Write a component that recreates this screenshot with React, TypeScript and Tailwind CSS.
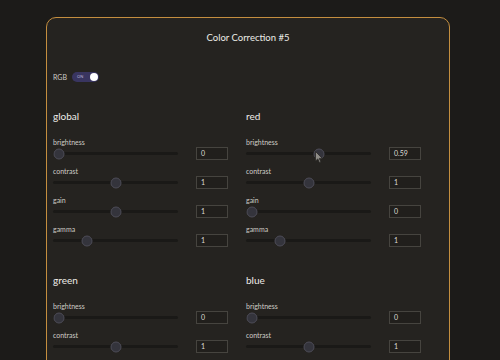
import React from 'react';

type Param = { name: string; value: number; min: number; max: number };

const channels: { title: string; params: Param[] }[] = [
  {
    title: 'global',
    params: [
      { name: 'brightness', value: 0, min: 0, max: 1 },
      { name: 'contrast', value: 1, min: 0, max: 2 },
      { name: 'gain', value: 1, min: 0, max: 2 },
      { name: 'gamma', value: 1, min: 0, max: 4 },
    ],
  },
  {
    title: 'red',
    params: [
      { name: 'brightness', value: 0.59, min: 0, max: 1 },
      { name: 'contrast', value: 1, min: 0, max: 2 },
      { name: 'gain', value: 0, min: 0, max: 2 },
      { name: 'gamma', value: 1, min: 0, max: 4 },
    ],
  },
  {
    title: 'green',
    params: [
      { name: 'brightness', value: 0, min: 0, max: 1 },
      { name: 'contrast', value: 1, min: 0, max: 2 },
      { name: 'gain', value: 1, min: 0, max: 2 },
      { name: 'gamma', value: 1, min: 0, max: 4 },
    ],
  },
  {
    title: 'blue',
    params: [
      { name: 'brightness', value: 0, min: 0, max: 1 },
      { name: 'contrast', value: 1, min: 0, max: 2 },
      { name: 'gain', value: 1, min: 0, max: 2 },
      { name: 'gamma', value: 1, min: 0, max: 4 },
    ],
  },
];

const Cursor = () => (
  <svg
    width="9"
    height="13"
    viewBox="0 0 9 13"
    className="absolute left-[0px] top-[1px] pointer-events-none"
  >
    <path
      d="M1 1 L1 10.5 L3.3 8.4 L4.9 12 L6.3 11.4 L4.8 7.9 L7.8 7.9 Z"
      fill="#8f8d88"
      stroke="#2a2826"
      strokeWidth="0.8"
    />
  </svg>
);

const SliderRow = ({ p, cursor }: { p: Param; cursor?: boolean }) => {
  const pct = (p.value - p.min) / (p.max - p.min);
  return (
    <div className="flex flex-col">
      <div className="h-[9px] text-[7px] leading-[9px] text-[#cfccc6]">{p.name}</div>
      <div className="flex items-center h-[13px] gap-[18px]">
        <div className="relative w-[125px] h-[3px] bg-[#1a1917] rounded-full">
          <div
            className="absolute top-1/2 -translate-y-1/2 -translate-x-1/2 w-[11px] h-[11px] rounded-full bg-[#34343c] border border-[#4d4c57]"
            style={{ left: `calc(5.5px + ${pct} * (100% - 11px))` }}
          >
            {cursor && <Cursor />}
          </div>
        </div>
        <div className="w-[32px] h-[13px] border border-[#46443f] bg-[#211f1c] flex items-center pl-[4px] text-[7px] text-[#dedbd5]">
          {p.value}
        </div>
      </div>
    </div>
  );
};

const Channel = ({ title, params }: { title: string; params: Param[] }) => (
  <div className="flex flex-col">
    <div className="h-[13px] text-[10px] leading-[13px] text-[#eeece8]">{title}</div>
    <div className="flex flex-col gap-[7px] mt-[15px]">
      {params.map((p) => (
        <SliderRow
          key={p.name}
          p={p}
          cursor={title === 'red' && p.name === 'brightness'}
        />
      ))}
    </div>
  </div>
);

const App = (): JSX.Element => {
  return (
    <div
      className="w-[500px] h-[360px] overflow-hidden bg-[#1c1b19] pt-[17px] pl-[46px]"
      style={{ fontFamily: 'Lato, "Open Sans", sans-serif' }}
    >
      <div className="w-[404px] h-[400px] rounded-t-[10px] border-[1.5px] border-[#c48e3f] bg-[#252320] px-[6px] pt-[13px]">
        <h1 className="text-center text-[9.5px] leading-[14px] text-[#ecebe7]">
          Color Correction #5
        </h1>
        <div className="flex items-center gap-[5px] mt-[27px] h-[10px]">
          <span className="text-[7px] text-[#cfccc6]">RGB</span>
          <div className="w-[27px] h-[10px] rounded-full bg-[#393560] flex items-center justify-between pl-[5px] pr-[1px]">
            <span className="text-[4px] leading-none text-[#bcb8d8]">ON</span>
            <span className="w-[8px] h-[8px] rounded-full bg-white" />
          </div>
        </div>
        <div className="grid grid-cols-[193px_193px] gap-y-[27px] mt-[28px]">
          {channels.map((c) => (
            <Channel key={c.title} title={c.title} params={c.params} />
          ))}
        </div>
      </div>
    </div>
  );
};

export default App;
